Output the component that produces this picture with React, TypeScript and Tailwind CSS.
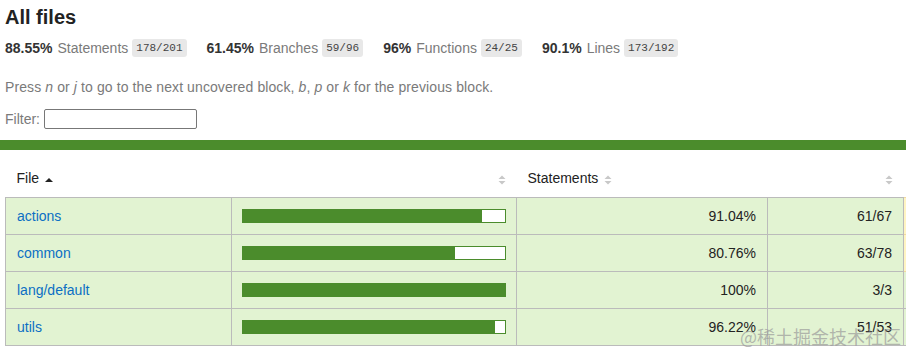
const rows = [
  { name: 'actions', pct: 91.04, abs: '61/67', next: 'medium' },
  { name: 'common', pct: 80.76, abs: '63/78', next: 'medium' },
  { name: 'lang/default', pct: 100, abs: '3/3', next: 'high' },
  { name: 'utils', pct: 96.22, abs: '51/53', next: 'high' },
];

const stats = [
  { pct: '88.55%', label: 'Statements', frac: '178/201' },
  { pct: '61.45%', label: 'Branches', frac: '59/96' },
  { pct: '96%', label: 'Functions', frac: '24/25' },
  { pct: '90.1%', label: 'Lines', frac: '173/192' },
];

function Sorter({ active }: { active?: boolean }) {
  if (active) {
    return (
      <svg width="8" height="10" viewBox="0 0 8 10" className="inline-block ml-[6px]">
        <path d="M0 7 L4 3 L8 7 Z" fill="#222" />
      </svg>
    );
  }
  return (
    <svg width="8" height="12" viewBox="0 0 8 12" className="inline-block">
      <path d="M0.5 5 L4 1.5 L7.5 5 Z" fill="#c8c8c8" />
      <path d="M0.5 7 L4 10.5 L7.5 7 Z" fill="#c8c8c8" />
    </svg>
  );
}

export default function App() {
  return (
    <div
      className="relative w-[906px] h-[354px] overflow-hidden bg-white text-[#333] text-[14px]"
      style={{ fontFamily: '"Helvetica Neue", Helvetica, "Liberation Sans", Arial, sans-serif' }}
    >
      <div className="px-[5px]">
        <h1 className="text-[20px] font-bold leading-[24px] pt-[5px] text-[#222]">All files</h1>
        <div className="mt-[8px] h-[22px] flex items-center">
          {stats.map((s) => (
            <div key={s.label} className="flex items-center mr-[20px]">
              <span className="font-bold">{s.pct}</span>
              <span className="ml-[5px] text-[#7a7a7a]">{s.label}</span>
              <span
                className="ml-[4px] bg-[#e8e8e8] text-[#444] text-[11px] leading-[18px] px-[4px] rounded-[3px]"
                style={{ fontFamily: '"Liberation Mono", Menlo, monospace' }}
              >
                {s.frac}
              </span>
            </div>
          ))}
        </div>
        <p className="mt-[18px] leading-[20px] text-[#7a7a7a] tracking-[0.1px]">
          Press <em>n</em> or <em>j</em> to go to the next uncovered block, <em>b</em>, <em>p</em> or <em>k</em> for the previous block.
        </p>
        <div className="mt-[12px] h-[20px] flex items-center text-[#7a7a7a]">
          <span>Filter:</span>
          <input className="ml-[4px] w-[153px] h-[20px] border border-[#777] rounded-[2px] bg-white" />
        </div>
      </div>
      <div className="mt-[11px] h-[10px] bg-[#4b8c2c]" />
      <div className="pl-[5px] pt-[11px]">
        <table className="border-collapse w-[1100px] table-fixed">
          <colgroup>
            <col className="w-[226px]" />
            <col className="w-[285px]" />
            <col className="w-[251px]" />
            <col className="w-[136px]" />
            <col className="w-[202px]" />
          </colgroup>
          <thead>
            <tr className="h-[36px] text-left">
              <th className="font-normal px-[11px] text-[#222]">
                File
                <Sorter active />
              </th>
              <th className="font-normal px-[11px] text-right">
                <Sorter />
              </th>
              <th className="font-normal px-[11px] text-[#222]">
                <span>Statements</span>
                <span className="ml-[6px]">
                  <Sorter />
                </span>
              </th>
              <th className="font-normal px-[11px] text-right">
                <Sorter />
              </th>
              <th />
            </tr>
          </thead>
          <tbody>
            {rows.map((r) => (
              <tr key={r.name} className="h-[37px]">
                <td className="border border-[#bbb] bg-[#e2f3d2] px-[11px] pt-[2px]">
                  <a className="text-[#0b6fc4]">{r.name}</a>
                </td>
                <td className="border border-[#bbb] bg-[#e2f3d2] px-[10px]">
                  <div className="h-[14px] w-[264px] border border-[#4b8c2c] bg-white flex">
                    <div className="h-full bg-[#4b8c2c]" style={{ width: `${r.pct}%` }} />
                  </div>
                </td>
                <td className="border border-[#bbb] bg-[#e2f3d2] px-[11px] pt-[2px] text-right text-[#222]">{r.pct}%</td>
                <td className="border border-[#bbb] bg-[#e2f3d2] px-[11px] pt-[2px] text-right text-[#222]">{r.abs}</td>
                <td
                  className={
                    r.next === 'medium'
                      ? 'border border-[#f0d9a0] bg-[#fff4c2]'
                      : 'border border-[#bbb] bg-[#e2f3d2]'
                  }
                />
              </tr>
            ))}
          </tbody>
        </table>
      </div>
      <div
        className="absolute left-[740px] top-[324px] text-[18px] leading-[24px] whitespace-nowrap text-[#9a9a9a]/70"
        style={{ fontFamily: '"Noto Sans CJK SC", "Liberation Sans", sans-serif' }}
      >
        @稀土掘金技术社区
      </div>
    </div>
  );
}
